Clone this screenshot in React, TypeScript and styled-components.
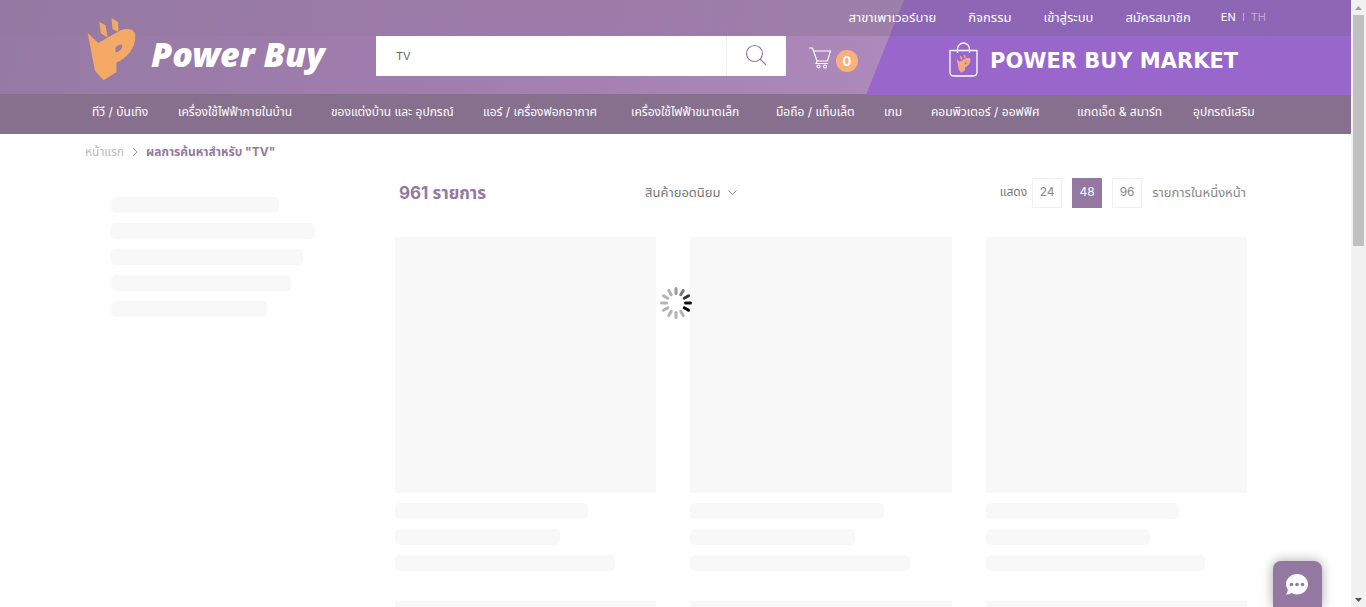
import React from "react";
import styled, { createGlobalStyle } from "styled-components";

const GlobalStyle = createGlobalStyle`
  *, *::before, *::after { box-sizing: border-box; }
  body {
    margin: 0;
    background: #fff;
    color: #777;
    font: 12px/18px Inter, "Noto Sans", "Noto Sans Thai", sans-serif;
  }
  a { color: inherit; text-decoration: none; }
  button, input, select { font: inherit; }
`;

const PURPLE = "#9478a2";

const Shell = styled.div`
  display: grid;
  grid-template-columns: minmax(0, 1fr) 15px;
  height: 100vh;
  overflow: hidden;
`;

const Page = styled.div`
  min-width: 0;
  overflow: hidden;
`;

const Header = styled.header`
  position: relative;
  z-index: 1;
  display: grid;
  grid-template-columns: 291px 410px minmax(0, 1fr) 403px;
  grid-template-rows: 36px 58px;
  padding: 0 85px;
  background:
    linear-gradient(90deg, rgba(134, 112, 142, 0.05), rgba(134, 112, 142, 0.4) 65%) top / 100% 36px no-repeat,
    linear-gradient(100deg, #957aa3 0%, #a07dae 30%, #a680b3 45%, #ad8abb 66%);

  &::before {
    content: "";
    position: absolute;
    z-index: -1;
    inset: 0 0 -1px auto;
    width: 485px;
    background:
      linear-gradient(rgba(120, 101, 140, 0.35), rgba(120, 101, 140, 0.35)) top / 100% 36px no-repeat,
      #9966cc;
    clip-path: polygon(38px 0, 100% 0, 100% 100%, 0 100%);
  }
`;

const Brand = styled.a`
  grid-row: 1 / 3;
  display: flex;
  align-items: center;
  gap: 15px;
  padding: 4px 0 0 2px;
  color: #fff;
  font: italic 900 34px/44px "Noto Sans", sans-serif;
`;

const BrandName = styled.span`
  padding-top: 9px;
  white-space: nowrap;
`;

const TopLinks = styled.nav`
  grid-column: 2 / 5;
  display: flex;
  justify-content: flex-end;
  align-items: center;
  gap: 32px;
  padding-bottom: 2px;
  color: #fff;
  font-size: 13px;
`;

const Languages = styled.div`
  display: flex;
  align-items: center;
  gap: 7px;
  margin-left: -2px;
  font-size: 11px;
`;

const Language = styled.a<{ $muted?: boolean }>`
  opacity: ${(p) => (p.$muted ? 0.45 : 1)};
`;

const Divider = styled.span`
  width: 1px;
  height: 8px;
  background: rgba(255, 255, 255, 0.45);
`;

const SearchForm = styled.form`
  grid-column: 2;
  display: flex;
  height: 40px;
  background: #fff;
`;

const SearchInput = styled.input`
  flex: 1;
  min-width: 0;
  padding: 0 20px;
  border: 0;
  background: none;
  color: #666;
  font-size: 11px;
  outline: none;
`;

const SearchButton = styled.button`
  display: grid;
  place-items: center;
  width: 60px;
  padding: 0 2px 2px 0;
  border: 0;
  border-left: 1px solid #f0f0f0;
  background: none;
`;

const CartLink = styled.a`
  display: flex;
  align-items: center;
  gap: 4px;
  height: 50px;
  padding-left: 23px;
`;

const CartIcon = styled.svg`
  margin-bottom: 6px;
`;

const Badge = styled.span`
  width: 22px;
  height: 22px;
  border-radius: 50%;
  background: #f9b079;
  color: #fff;
  font-weight: 700;
  font-size: 13px;
  line-height: 22px;
  text-align: center;
`;

const MarketLink = styled.a`
  display: flex;
  align-items: center;
  gap: 12px;
  height: 50px;
  padding-left: 86px;
  color: #fff;
  font: 700 21px/24px "DejaVu Sans", sans-serif;
  white-space: nowrap;

  svg { margin-bottom: 4px; }
`;

const CategoryBar = styled.nav`
  display: grid;
  grid-template-columns: 86fr 153fr 152fr 148fr 145fr 108fr 47fr 146fr 116fr 66fr;
  align-items: center;
  height: 40px;
  padding: 0 92px 4px;
  background: #86708e;
  color: #fff;
  white-space: nowrap;
`;

const Breadcrumb = styled.nav`
  display: flex;
  align-items: center;
  gap: 8px;
  height: 36px;
  padding: 0 85px;
  color: #bbb;

  strong { color: ${PURPLE}; }
`;

const Content = styled.main`
  display: grid;
  grid-template-columns: 240px minmax(0, 1fr);
  gap: 44px;
  padding: 8px 104px 0 111px;
`;

const Filters = styled.aside`
  padding-top: 19px;
`;

const Bar = styled.div<{ $share: number }>`
  width: ${(p) => p.$share}%;
  height: 16px;
  margin-bottom: 10px;
  border-radius: 5px;
  background: #f8f8f8;
`;

const Toolbar = styled.div`
  display: grid;
  grid-template-columns: 246px auto 1fr;
  align-items: center;
  height: 30px;
  margin-bottom: 29px;
  padding-left: 4px;
`;

const Count = styled.h1`
  margin: 0;
  color: ${PURPLE};
  font-size: 17px;
  line-height: 24px;
`;

const SortBox = styled.label`
  display: flex;
  align-items: center;
  gap: 7px;
  font-size: 13px;
`;

const SortSelect = styled.select`
  appearance: none;
  padding: 0 0 2px;
  border: 0;
  background: none;
  color: #777;
`;

const Pager = styled.div`
  display: flex;
  justify-content: flex-end;
  align-items: center;
  gap: 10px;
  padding-right: 1px;
  color: #888;
  white-space: nowrap;
`;

const PagerLabel = styled.span`
  margin-right: -5px;
  padding-bottom: 2px;
  color: #777;
`;

const PagerUnit = styled.span`
  padding-bottom: 2px;
  font-size: 13px;
`;

const PageSize = styled.button<{ $active?: boolean }>`
  width: 30px;
  height: 30px;
  padding: 0 0 2px;
  border: 1px solid ${(p) => (p.$active ? PURPLE : "#f0f0f0")};
  background: ${(p) => (p.$active ? PURPLE : "#fff")};
  color: ${(p) => (p.$active ? "#fff" : "#888")};
`;

const Products = styled.div`
  display: grid;
  grid-template-columns: repeat(3, minmax(0, 1fr));
  gap: 20px 34px;
`;

const Photo = styled.div`
  height: 256px;
  margin-bottom: 10px;
  background: #f8f8f8;
`;

const Spinner = styled.div`
  position: fixed;
  top: 50%;
  left: calc(50% - 7px);
  width: 32px;
  height: 32px;
  margin: -17px 0 0 -16px;
`;

const ChatButton = styled.button`
  position: fixed;
  right: 44px;
  bottom: 0;
  display: grid;
  place-items: center;
  width: 49px;
  height: 46px;
  padding: 0 2px 0 0;
  border: 0;
  border-radius: 8px 8px 0 0;
  background: ${PURPLE};
  box-shadow: 0 0 12px rgba(0, 0, 0, 0.35);
`;

const ScrollTrack = styled.div`
  display: flex;
  flex-direction: column;
  align-items: center;
  background: #f1f1f1;
`;

const Thumb = styled.div`
  width: 11px;
  height: 38%;
  margin-bottom: auto;
  background: #c1c1c1;
`;

const Hand = () => (
  <>
    <path d="M89 64 108 75 114 112 94 99Z" />
    <path d="M126 53 146 66 147 95 129 86Z" />
    <path
      fillRule="evenodd"
      d="M54 98 86 128 150 92C176 80 198 87 198 108C198 145 172 175 141 187V216L102 241 76 212ZM138 142V157C152 155 160 145 158 134C152 130 144 136 138 142Z"
    />
  </>
);

const ScrollArrow = ({ down }: { down?: boolean }) => (
  <svg width="15" height="15" viewBox="0 0 15 15" aria-hidden="true">
    <path d={down ? "M4 6h7l-3.500 4z" : "M4 10h7L7.500 6z"} fill={down ? "#505050" : "#a3a3a3"} />
  </svg>
);

const categories = [
  "ทีวี / บันเทิง",
  "เครื่องใช้ไฟฟ้าภายในบ้าน",
  "ของแต่งบ้าน และ อุปกรณ์",
  "แอร์ / เครื่องฟอกอากาศ",
  "เครื่องใช้ไฟฟ้าขนาดเล็ก",
  "มือถือ / แท็บเล็ต",
  "เกม",
  "คอมพิวเตอร์ / ออฟฟิศ",
  "แกดเจ็ด & สมาร์ท",
  "อุปกรณ์เสริม",
];

const spokes = ["#999", "#777", "#333", "#111", "#000", "#b3b3b3", "#b3b3b3", "#b3b3b3", "#b3b3b3", "#b3b3b3", "#b3b3b3", "#b3b3b3"];

export default function App() {
  return (
    <Shell>
      <GlobalStyle />
      <Page>
        <Header>
          <Brand href="#">
            <svg width="49" height="64" viewBox="52 50 148 193" fill="#f4aa66" aria-hidden="true">
              <Hand />
            </svg>
            <BrandName>Power Buy</BrandName>
          </Brand>
          <TopLinks>
            <a href="#">สาขาเพาเวอร์บาย</a>
            <a href="#">กิจกรรม</a>
            <a href="#">เข้าสู่ระบบ</a>
            <a href="#">สมัครสมาชิก</a>
            <Languages>
              <Language href="#">EN</Language>
              <Divider />
              <Language href="#" $muted>TH</Language>
            </Languages>
          </TopLinks>
          <SearchForm onSubmit={(e) => e.preventDefault()}>
            <SearchInput aria-label="ค้นหา" defaultValue="TV" />
            <SearchButton aria-label="ค้นหา">
              <svg width="22" height="22" viewBox="0 0 22 22" fill="none" stroke={PURPLE} strokeWidth="1.2">
                <circle cx="9.500" cy="9.500" r="8" />
                <path d="M15 15l6 6" />
              </svg>
            </SearchButton>
          </SearchForm>
          <CartLink href="#">
            <CartIcon width="23" height="22" viewBox="0 0 23 22" fill="none" stroke="#fff" strokeWidth="1.2" aria-hidden="true">
              <path d="M0 1h3.500L8 14h10.500L21.500 4H5M8 14 7 16.500h12" />
              <circle cx="9.500" cy="19.500" r="1.500" />
              <circle cx="16" cy="19.500" r="1.500" />
            </CartIcon>
            <Badge>0</Badge>
          </CartLink>
          <MarketLink href="#">
            <svg width="29" height="35" viewBox="0 0 29 35" aria-hidden="true">
              <path d="M1 8.500h27V30q0 4-4 4H5q-4 0-4-4zM8.500 11V7a6 6 0 0 1 12 0v4" fill="none" stroke="#fff" strokeWidth="1.300" />
              <g fill="#f4aa80" transform="translate(2.500 7.500) scale(.096)">
                <Hand />
              </g>
            </svg>
            POWER BUY MARKET
          </MarketLink>
        </Header>
        <CategoryBar>
          {categories.map((name) => (
            <a href="#" key={name}>{name}</a>
          ))}
        </CategoryBar>
        <Breadcrumb>
          <a href="#">หน้าแรก</a>
          <svg width="6" height="8" viewBox="0 0 6 8" fill="none" stroke="#999" aria-hidden="true">
            <path d="M1 0l4 4-4 4" />
          </svg>
          <strong>ผลการค้นหาสำหรับ "TV"</strong>
        </Breadcrumb>
        <Content>
          <Filters>
            {[70, 85, 80, 75, 65].map((share) => (
              <Bar key={share} $share={share} />
            ))}
          </Filters>
          <section>
            <Toolbar>
              <Count>961 รายการ</Count>
              <SortBox>
                <SortSelect aria-label="เรียงตาม">
                  <option>สินค้ายอดนิยม</option>
                </SortSelect>
                <svg width="9" height="6" viewBox="0 0 9 6" fill="none" stroke="#888" aria-hidden="true">
                  <path d="M.5 .5l4 4 4-4" />
                </svg>
              </SortBox>
              <Pager>
                <PagerLabel>แสดง</PagerLabel>
                <PageSize>24</PageSize>
                <PageSize $active>48</PageSize>
                <PageSize>96</PageSize>
                <PagerUnit>รายการในหนึ่งหน้า</PagerUnit>
              </Pager>
            </Toolbar>
            <Products>
              {[1, 2, 3, 4, 5, 6].map((id) => (
                <article key={id}>
                  <Photo />
                  <Bar $share={74} />
                  <Bar $share={63} />
                  <Bar $share={84} />
                </article>
              ))}
            </Products>
          </section>
        </Content>
      </Page>
      <ScrollTrack>
        <ScrollArrow />
        <Thumb />
        <ScrollArrow down />
      </ScrollTrack>
      <Spinner>
        <svg width="32" height="32" viewBox="-16 -16 32 32" strokeWidth="3" strokeLinecap="round">
          {spokes.map((color, i) => (
            <path key={i} d="M0-9.500V-14.500" stroke={color} transform={`rotate(${i * 30})`} />
          ))}
        </svg>
      </Spinner>
      <ChatButton aria-label="แชท">
        <svg width="22" height="21" viewBox="0 0 22 21" aria-hidden="true">
          <path d="M11 0C17 0 22 4.500 22 10.200S17 20.500 11 20.500q-3 0-5.500-1.500Q3 20.500 0 20.500 2 18 1.800 15.500 0 13 0 10.200C0 4.500 5 0 11 0Z" fill="#fff" />
          <g fill={PURPLE}>
            <circle cx="5.500" cy="10.500" r="1.800" />
            <circle cx="11" cy="10.500" r="1.800" />
            <circle cx="16.500" cy="10.500" r="1.800" />
          </g>
        </svg>
      </ChatButton>
    </Shell>
  );
}
